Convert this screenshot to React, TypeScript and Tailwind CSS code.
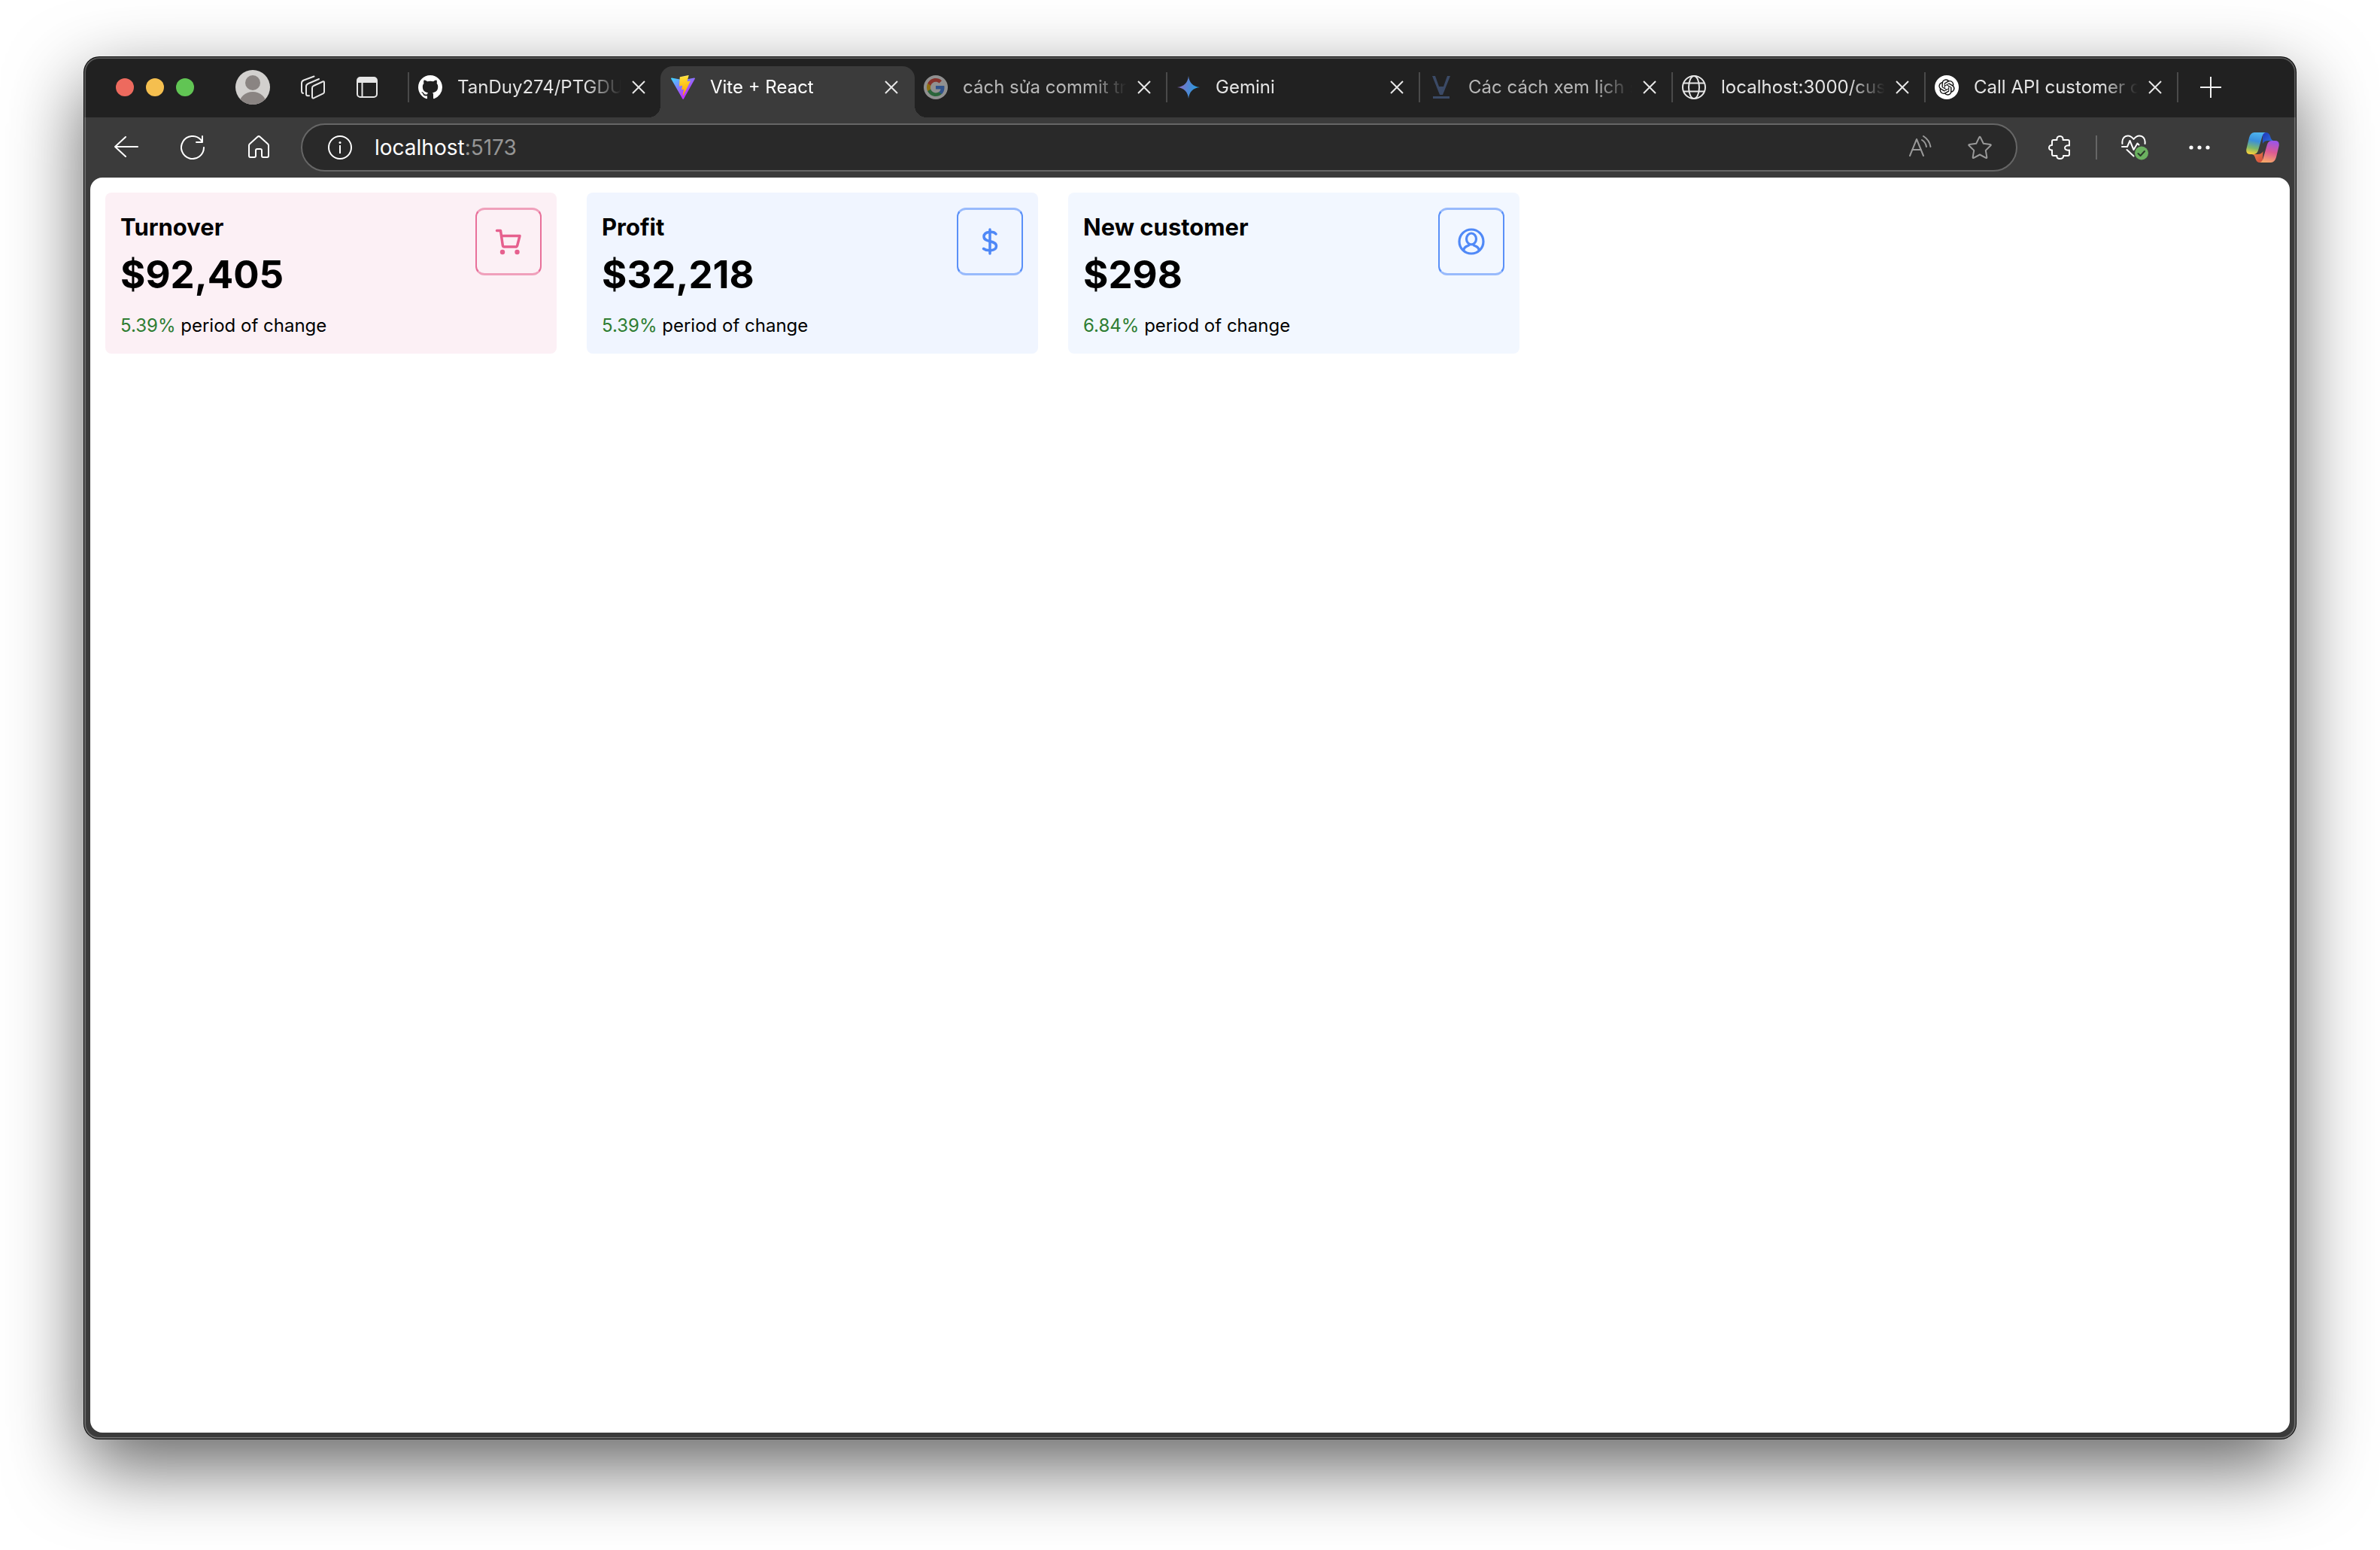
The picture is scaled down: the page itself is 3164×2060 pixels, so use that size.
import type { CSSProperties, ReactNode } from "react";

const fade: CSSProperties = { maskImage: "linear-gradient(to right, black 78%, transparent 100%)" };

function GithubIcon() {
  return (
    <svg viewBox="0 0 16 16" className="size-8" fill="#fff" aria-hidden="true">
      <path d="M8 0C3.58 0 0 3.58 0 8c0 3.54 2.29 6.53 5.47 7.59.4.07.55-.17.55-.38 0-.19-.01-.82-.01-1.49-2.01.37-2.53-.49-2.69-.94-.09-.23-.48-.94-.82-1.13-.28-.15-.68-.52-.01-.53.63-.01 1.08.58 1.23.82.72 1.21 1.87.87 2.33.66.07-.52.28-.87.51-1.07-1.78-.2-3.64-.89-3.64-3.95 0-.87.31-1.59.82-2.15-.08-.2-.36-1.02.08-2.12 0 0 .67-.21 2.2.82.64-.18 1.32-.27 2-.27s1.36.09 2 .27c1.53-1.04 2.2-.82 2.2-.82.44 1.1.16 1.92.08 2.12.51.56.82 1.27.82 2.15 0 3.07-1.87 3.75-3.65 3.95.29.25.54.73.54 1.48 0 1.07-.01 1.93-.01 2.2 0 .21.15.46.55.38A8.01 8.01 0 0 0 16 8c0-4.42-3.58-8-8-8z" />
    </svg>
  );
}

function ViteIcon() {
  return (
    <svg viewBox="0 0 256 257" className="size-8" aria-hidden="true">
      <defs>
        <linearGradient id="viteBlue" x1="-.828%" x2="57.636%" y1="7.652%" y2="78.411%">
          <stop offset="0%" stopColor="#41D1FF" />
          <stop offset="100%" stopColor="#BD34FE" />
        </linearGradient>
        <linearGradient id="viteGold" x1="43.376%" x2="50.316%" y1="2.242%" y2="89.03%">
          <stop offset="0%" stopColor="#FFEA83" />
          <stop offset="8.333%" stopColor="#FFDD35" />
          <stop offset="100%" stopColor="#FFA800" />
        </linearGradient>
      </defs>
      <path fill="url(#viteBlue)" d="M255.153 37.938L134.897 252.976c-2.483 4.44-8.862 4.466-11.382.048L.875 37.958c-2.746-4.814 1.371-10.646 6.827-9.67l120.385 21.517a6.537 6.537 0 0 0 2.322-.004l117.867-21.483c5.438-.991 9.574 4.796 6.877 9.62Z" />
      <path fill="url(#viteGold)" d="M185.432.063L96.44 17.501a3.268 3.268 0 0 0-2.634 3.014l-5.474 92.456a3.268 3.268 0 0 0 3.997 3.378l24.777-5.718c2.318-.535 4.413 1.507 3.936 3.838l-7.361 36.047c-.495 2.426 1.782 4.5 4.151 3.78l15.304-4.649c2.372-.72 4.652 1.36 4.15 3.788l-11.698 56.621c-.732 3.542 3.979 5.473 5.943 2.437l1.313-2.028l72.516-144.72c1.215-2.423-.88-5.186-3.54-4.672l-25.505 4.922c-2.396.462-4.435-1.77-3.759-4.114l16.646-57.705c.677-2.35-1.37-4.583-3.769-4.113Z" />
    </svg>
  );
}

function GoogleIcon() {
  return (
    <svg viewBox="0 0 32 32" className="size-8 opacity-50" aria-hidden="true">
      <circle cx="16" cy="16" r="16" fill="#fff" />
      <g transform="translate(4 4)">
        <path fill="#4285F4" d="M23.5 12.3c0-.9-.1-1.5-.2-2.2H12v4.5h6.6c-.3 1.5-1.1 2.7-2.4 3.6v2.9h3.9c2.200-2.100 3.400-5.100 3.400-8.800z" />
        <path fill="#34A853" d="M12 24c3.200 0 5.900-1.100 7.900-2.900l-3.900-2.900c-1.100.7-2.400 1.200-4 1.200-3.100 0-5.800-2.100-6.700-4.900H1.300v3C3.300 21.300 7.300 24 12 24z" />
        <path fill="#FBBC05" d="M5.300 14.300c-.5-1.500-.5-3.100 0-4.600v-3H1.300c-1.700 3.300-1.700 7.300 0 10.600z" />
        <path fill="#EA4335" d="M12 4.800c1.800 0 3.300.6 4.600 1.800l3.400-3.400C17.900 1.200 15.200 0 12 0 7.300 0 3.300 2.700 1.300 6.700l4 3C6.200 6.900 8.900 4.800 12 4.800z" />
      </g>
    </svg>
  );
}

function GeminiIcon() {
  return (
    <svg viewBox="0 0 32 32" className="size-8" aria-hidden="true">
      <defs>
        <linearGradient id="gemini" x1="0" x2="1" y1="0.400" y2="0.600">
          <stop offset="0%" stopColor="#9168C0" />
          <stop offset="45%" stopColor="#5684D1" />
          <stop offset="100%" stopColor="#1BA1E3" />
        </linearGradient>
      </defs>
      <path fill="url(#gemini)" d="M16 1C17 10 22 15 31 16 22 17 17 22 16 31 15 22 10 17 1 16 10 15 15 10 16 1z" />
    </svg>
  );
}

function VibloIcon() {
  return (
    <svg viewBox="0 0 32 32" className="size-8" fill="#3b4a66" aria-hidden="true">
      <path d="M4 1h4l5 14h6l5-14h4L18 26h-4z" />
      <path d="M5 28h22v3H5z" />
    </svg>
  );
}

function GlobeIcon() {
  return (
    <svg viewBox="0 0 32 32" className="size-8" fill="none" stroke="#e6e6e6" strokeWidth="2" aria-hidden="true">
      <circle cx="16" cy="16" r="15" />
      <ellipse cx="16" cy="16" rx="7" ry="15" />
      <path d="M2 10.500h28M2 21.500h28" />
    </svg>
  );
}

function OpenAiIcon() {
  return (
    <svg viewBox="0 0 32 32" className="size-8" aria-hidden="true">
      <circle cx="16" cy="16" r="16" fill="#fff" />
      <g transform="translate(5.300 5.300) scale(0.890)">
        <path
          fill="#111"
          d="M22.2819 9.8211a5.9847 5.9847 0 0 0-.5157-4.9108 6.0462 6.0462 0 0 0-6.5098-2.9A6.0651 6.0651 0 0 0 4.9807 4.1818a5.9847 5.9847 0 0 0-3.9977 2.9 6.0462 6.0462 0 0 0 .7427 7.0966 5.98 5.98 0 0 0 .511 4.9107 6.051 6.051 0 0 0 6.5146 2.9001A5.9847 5.9847 0 0 0 13.2599 24a6.0557 6.0557 0 0 0 5.7718-4.2058 5.9894 5.9894 0 0 0 3.9977-2.9001 6.0557 6.0557 0 0 0-.7475-7.0729zm-9.022 12.6081a4.4755 4.4755 0 0 1-2.8764-1.0408l.1419-.0804 4.7783-2.7582a.7948.7948 0 0 0 .3927-.6813v-6.7369l2.02 1.1686a.071.071 0 0 1 .038.052v5.5826a4.504 4.504 0 0 1-4.4945 4.4944zm-9.6607-4.1254a4.4708 4.4708 0 0 1-.5346-3.0137l.142.0852 4.783 2.7582a.7712.7712 0 0 0 .7806 0l5.8428-3.3685v2.3324a.0804.0804 0 0 1-.0332.0615L9.74 19.9502a4.4992 4.4992 0 0 1-6.1408-1.6464zM2.3408 7.8956a4.485 4.485 0 0 1 2.3655-1.9728V11.6a.7664.7664 0 0 0 .3879.6765l5.8144 3.3543-2.0201 1.1685a.0757.0757 0 0 1-.071 0l-4.8303-2.7865A4.504 4.504 0 0 1 2.3408 7.872zm16.5963 3.8558L13.1038 8.364 15.1192 7.2a.0757.0757 0 0 1 .071 0l4.8303 2.7913a4.4944 4.4944 0 0 1-.6765 8.1042v-5.6772a.79.79 0 0 0-.407-.667zm2.0107-3.0231l-.142-.0852-4.7735-2.7818a.7759.7759 0 0 0-.7854 0L9.409 9.2297V6.8974a.0662.0662 0 0 1 .0284-.0615l4.8303-2.7866a4.4992 4.4992 0 0 1 6.6802 4.66zM8.3065 12.863l-2.02-1.1638a.0804.0804 0 0 1-.038-.0567V6.0742a4.4992 4.4992 0 0 1 7.3757-3.4537l-.142.0805L8.704 5.459a.7948.7948 0 0 0-.3927.6813zm1.0976-2.3654l2.602-1.4998 2.6069 1.4998v2.9994l-2.5974 1.4997-2.6067-1.4997Z"
        />
      </g>
    </svg>
  );
}

type TabData = { title: string; icon: ReactNode; active?: boolean; dim?: boolean; sep?: boolean };

const tabs: TabData[] = [
  { title: "TanDuy274/PTGDU", icon: <GithubIcon />, sep: true },
  { title: "Vite + React", icon: <ViteIcon />, active: true },
  { title: "cách sửa commit tr", icon: <GoogleIcon />, dim: true },
  { title: "Gemini", icon: <GeminiIcon />, sep: true },
  { title: "Các cách xem lịch s", icon: <VibloIcon />, dim: true, sep: true },
  { title: "localhost:3000/cus", icon: <GlobeIcon />, sep: true },
  { title: "Call API customer c", icon: <OpenAiIcon />, sep: true },
];

function Tab({ title, icon, active, dim, sep }: TabData) {
  const color = active ? "text-white" : dim ? "text-[#b8b8b8]" : "text-[#e4e4e4]";
  return (
    <div className={`relative flex h-20 max-w-[336px] min-w-0 flex-1 items-center ${active ? "z-10" : ""}`}>
      {active && (
        <div className="absolute -right-0.5 bottom-0 left-0 top-3 rounded-t-[16px] bg-[#3b3b3b]">
          <div className="absolute -left-4 bottom-0 size-4 bg-[radial-gradient(circle_at_0_0,transparent_16px,#3b3b3b_16px)]" />
          <div className="absolute -right-4 bottom-0 size-4 bg-[radial-gradient(circle_at_100%_0,transparent_16px,#3b3b3b_16px)]" />
        </div>
      )}
      <span className={`h-10 w-0.5 shrink-0 ${sep ? "bg-[#4a4a4a]" : ""}`} />
      <button type="button" className="relative flex min-w-0 flex-1 items-center pl-3 text-left">
        <span className="shrink-0">{icon}</span>
        <span
          className={`ml-5 block w-[218px] overflow-hidden text-2xl leading-8 whitespace-nowrap ${color}`}
          style={fade}
        >
          {title}
        </span>
      </button>
      <button type="button" aria-label={`Close ${title}`} className="relative mr-[17px] grid size-6 shrink-0 place-items-center">
        <svg viewBox="0 0 18 18" className="size-[18px]" stroke="#e8e8e8" strokeWidth="2" aria-hidden="true">
          <path d="M1 1l16 16M17 1L1 17" />
        </svg>
      </button>
    </div>
  );
}

function IconButton({ label, className, children }: { label: string; className?: string; children: ReactNode }) {
  return (
    <button type="button" aria-label={label} className={`grid shrink-0 place-items-center ${className ?? ""}`}>
      {children}
    </button>
  );
}

function TabStrip() {
  return (
    <header className="flex h-20 items-center pl-[42px]">
      <div className="flex gap-4">
        <button type="button" aria-label="Close window" className="size-6 rounded-full bg-[#ed6a5e]" />
        <button type="button" aria-label="Minimize window" className="size-6 rounded-full bg-[#f5bf4f]" />
        <button type="button" aria-label="Zoom window" className="size-6 rounded-full bg-[#61c554]" />
      </div>
      <IconButton label="Profile" className="ml-[55px]">
        <svg viewBox="0 0 46 46" className="size-[46px]" aria-hidden="true">
          <defs>
            <clipPath id="avatar">
              <circle cx="23" cy="23" r="23" />
            </clipPath>
          </defs>
          <circle cx="23" cy="23" r="23" fill="#d2d0ce" />
          <g clipPath="url(#avatar)" fill="#8a8482">
            <circle cx="23" cy="17" r="10" />
            <ellipse cx="23" cy="45" rx="18" ry="16" />
          </g>
        </svg>
      </IconButton>
      <IconButton label="Workspaces" className="ml-[41px]">
        <svg viewBox="0 0 32 32" className="size-8" fill="none" stroke="#e6e6e6" strokeWidth="2" strokeLinejoin="round" strokeLinecap="round" aria-hidden="true">
          <path d="M17 14l12-5.500q2-.8 2 1.200v12.500q0 1.500-1.500 2.200l-12 5.800q-2.500 1-2.500-1.300V17q0-2.200 2-3z" />
          <path d="M24 5L10 11q-3 1.300-3 4v10q0 2 2 2.300h2" />
          <path d="M17.500 1.500L4 6.500Q1 7.700 1 10.500v11q0 1.800 2 2.500" />
        </svg>
      </IconButton>
      <IconButton label="Tab actions menu" className="ml-[42px]">
        <svg viewBox="0 0 28 28" className="size-7" aria-hidden="true">
          <rect x="1" y="1" width="26" height="26" rx="4" fill="none" stroke="#e6e6e6" strokeWidth="2" />
          <path d="M1 8V5q0-4 4-4h18q4 0 4 4v3z" fill="#e6e6e6" />
          <path d="M7.500 8v19" stroke="#e6e6e6" strokeWidth="2" />
        </svg>
      </IconButton>
      <nav aria-label="Tabs" className="ml-10 flex min-w-0 flex-1">
        {tabs.map((t) => (
          <Tab key={t.title} {...t} />
        ))}
        <div className="flex h-20 items-center">
          <span className="h-10 w-0.5 bg-[#4a4a4a]" />
          <IconButton label="New tab" className="ml-[29px]">
            <svg viewBox="0 0 28 28" className="size-7" stroke="#f0f0f0" strokeWidth="2" aria-hidden="true">
              <path d="M14 0v28M0 14h28" />
            </svg>
          </IconButton>
        </div>
      </nav>
    </header>
  );
}

function Toolbar() {
  return (
    <div className="flex h-20 items-center bg-[#3b3b3b] pr-[22px] pl-10">
      <IconButton label="Back">
        <svg viewBox="0 0 32 32" className="size-8" fill="none" stroke="#fff" strokeWidth="2" strokeLinecap="round" strokeLinejoin="round" aria-hidden="true">
          <path d="M31 15H1M15 2L1 15l14 13" />
        </svg>
      </IconButton>
      <IconButton label="Refresh" className="ml-14">
        <svg viewBox="0 0 32 32" className="size-8" fill="none" stroke="#fff" strokeWidth="2" strokeLinecap="round" strokeLinejoin="round" aria-hidden="true">
          <path d="M31 16a15 15 0 1 1-4-10.200l2 2.700M29 1v8h-8" />
        </svg>
      </IconButton>
      <IconButton label="Home" className="ml-14">
        <svg viewBox="0 0 32 32" className="size-8" fill="none" stroke="#fff" strokeWidth="2" strokeLinejoin="round" aria-hidden="true">
          <path d="M3 13.500q0-1.300 1-2.200L14.500 1.800q1.500-1.300 3 0L28 11.300q1 .9 1 2.200V27q0 2-2 2h-5q-2 0-2-2v-7q0-2-2-2h-4q-2 0-2 2v7q0 2-2 2H5q-2 0-2-2z" />
        </svg>
      </IconButton>
      <div className="ml-10 flex h-16 min-w-0 flex-1 items-center rounded-full border-2 border-[#666] bg-[#292929] pr-8 pl-[34px]">
        <IconButton label="View site information">
          <svg viewBox="0 0 32 32" className="size-8" fill="none" stroke="#fff" strokeWidth="2" aria-hidden="true">
            <circle cx="16" cy="16" r="15" />
            <path d="M16 13v11" />
            <circle cx="16" cy="9.500" r="1.500" fill="#fff" stroke="none" />
          </svg>
        </IconButton>
        <button type="button" aria-label="Address bar" className="ml-[30px] min-w-0 flex-1 text-left text-[28px] leading-10 text-white">
          localhost<span className="text-[#959595]">:5173</span>
        </button>
        <IconButton label="Read aloud">
          <svg viewBox="0 0 32 32" className="size-8" fill="none" stroke="#999" strokeWidth="2" strokeLinecap="round" strokeLinejoin="round" aria-hidden="true">
            <path d="M3 27L12 5l9 22M6 19h12" />
            <path d="M19 6q5 3 6 9M21 1q8 5 9.500 14" />
          </svg>
        </IconButton>
        <IconButton label="Add to favorites" className="ml-12">
          <svg viewBox="0 0 32 32" className="size-8" fill="none" stroke="#999" strokeWidth="2" strokeLinejoin="round" aria-hidden="true">
            <path d="M15.200 2.500q.8-1.500 1.600 0l4 8.200 9 1.300q1.700.3.500 1.500l-6.500 6.400 1.500 9q.2 1.600-1.200.9L16 25.500l-8.100 4.300q-1.400.7-1.200-.9l1.500-9-6.500-6.400q-1.200-1.200.5-1.500l9-1.300z" />
          </svg>
        </IconButton>
      </div>
      <IconButton label="Extensions" className="ml-10">
        <svg viewBox="0 0 32 32" className="size-8" fill="none" stroke="#fff" strokeWidth="2" strokeLinejoin="round" aria-hidden="true">
          <path d="M8 6h4.500C12 3 13.500 1 16.500 1S21 3 20.500 6H27q2 0 2 2v5.500c-3-.5-6 .5-6 3s3 3.500 6 3V25q0 2-2 2h-6c.5 2.500-1.500 4-4.500 4S12 29.500 12.500 27H8q-2 0-2-2v-5.500c-2.500.3-4-1-4-3.200s1.500-3.600 4-3.300V8q0-2 2-2z" />
        </svg>
      </IconButton>
      <span className="ml-8 h-8 w-0.5 shrink-0 bg-[#666]" />
      <IconButton label="Browser essentials" className="ml-8">
        <svg viewBox="0 0 38 34" className="h-[34px] w-[38px]" fill="none" stroke="#fff" strokeWidth="2" strokeLinecap="round" strokeLinejoin="round" aria-hidden="true">
          <path d="M1.500 12C.5 5 4.500 1.500 9 1.500c3.500 0 5.500 2 7.500 4.500 2-2.500 4-4.500 7.500-4.500 4.500 0 8.500 3.500 7.500 10.500" />
          <path d="M1 16h7l3.500-8 5 12 5-8.500 2 2" />
          <path d="M7.500 20l9 8.500" />
          <circle cx="27" cy="24.500" r="9" fill="#6bb160" stroke="none" />
          <path d="M22.500 25l3 3 5.500-6" stroke="#2b3a29" />
        </svg>
      </IconButton>
      <IconButton label="Settings and more" className="ml-[52px]">
        <svg viewBox="0 0 28 6" className="h-1.5 w-7" fill="#fff" aria-hidden="true">
          <circle cx="3" cy="3" r="2.600" />
          <circle cx="14" cy="3" r="2.600" />
          <circle cx="25" cy="3" r="2.600" />
        </svg>
      </IconButton>
      <IconButton label="Copilot" className="ml-12">
        <svg viewBox="0 0 44 42" className="h-[42px] w-11" aria-hidden="true">
          <defs>
            <linearGradient id="copA" x1="0.600" x2="0.400" y1="0" y2="1">
              <stop offset="0%" stopColor="#4fb5ee" />
              <stop offset="40%" stopColor="#3a8fdc" />
              <stop offset="75%" stopColor="#7fb868" />
              <stop offset="100%" stopColor="#f2cf3c" />
            </linearGradient>
            <linearGradient id="copB" x1="0.600" x2="0.400" y1="0" y2="1">
              <stop offset="0%" stopColor="#9a55e8" />
              <stop offset="50%" stopColor="#dd5a93" />
              <stop offset="100%" stopColor="#f7a868" />
            </linearGradient>
            <linearGradient id="copC" x1="0" x2="1" y1="0" y2="1">
              <stop offset="0%" stopColor="#2034b8" />
              <stop offset="100%" stopColor="#2f7be0" />
            </linearGradient>
            <linearGradient id="copD" x1="0" x2="1" y1="0" y2="1">
              <stop offset="0%" stopColor="#f08a4a" />
              <stop offset="100%" stopColor="#cf4a3c" />
            </linearGradient>
          </defs>
          <path fill="url(#copC)" d="M22 1h4q4.500 0 6 5 1.500 6 5 6h-8q-5 0-7 4z" />
          <path fill="url(#copD)" d="M22 41h-4q-4 0-5.500-5-1.500-6-5-6h8q5 0 7-4z" />
          <path fill="url(#copA)" d="M11 1h16q-4 0-5.500 5L16 25q-1.500 5-6.500 5H5.500Q-1 30 .5 22.500L4 8q2-7 7-7z" />
          <path fill="url(#copB)" d="M33 41H17q4 0 5.500-5L28 17q1.500-5 6.500-5h4q6.500 0 5 7.500L40 34q-2 7-7 7z" />
        </svg>
      </IconButton>
    </div>
  );
}

function CartGlyph() {
  return (
    <svg viewBox="0 0 36 36" className="size-9" fill="none" stroke="#e6608e" strokeWidth="3.500" strokeLinejoin="round" strokeLinecap="round" aria-hidden="true">
      <path d="M2.500 3.500H7.500L10.300 23q.3 2 2.200 2h15q1.700 0 2.200-1.800L33 10.500H9" />
      <circle cx="10" cy="32" r="3.200" fill="#e6608e" stroke="none" />
      <circle cx="29.500" cy="32" r="3.200" fill="#e6608e" stroke="none" />
    </svg>
  );
}

function DollarGlyph() {
  return (
    <svg viewBox="0 0 36 36" className="size-9" fill="none" stroke="#4f88f7" strokeWidth="3.500" strokeLinecap="round" strokeLinejoin="round" aria-hidden="true">
      <path d="M18 2v32" />
      <path d="M26 8C23 4 10 4 10 11.500C10 20 26.500 15.500 26.500 24C26.500 31 14 31 9.500 27.500" />
    </svg>
  );
}

function PersonGlyph() {
  return (
    <svg viewBox="0 0 36 36" className="size-9" fill="none" stroke="#5089f7" strokeWidth="3.200" strokeLinejoin="round" aria-hidden="true">
      <circle cx="18" cy="18" r="16" />
      <ellipse cx="18" cy="14.500" rx="6.500" ry="7.500" />
      <path d="M7.500 29.500q1-4 5-5.500 3.500-1 3.500-3.500M28.500 29.500q-1-4-5-5.500-3.500-1-3.500-3.500" />
    </svg>
  );
}

const pinkBox = "border-x-[#e8709a] border-y-[#f0a0bb]";
const blueBox = "border-x-[#5a90f8] border-y-[#98bafc]";

const stats = [
  { label: "Turnover", value: "$92,405", pct: "5.39%", bg: "bg-[#fcf0f5]", border: pinkBox, glyph: <CartGlyph /> },
  { label: "Profit", value: "$32,218", pct: "5.39%", bg: "bg-[#f0f5ff]", border: blueBox, glyph: <DollarGlyph /> },
  { label: "New customer", value: "$298", pct: "6.84%", bg: "bg-[#f2f7ff]", border: blueBox, glyph: <PersonGlyph /> },
];

export default function App() {
  return (
    <div className="flex min-h-screen flex-col overflow-hidden bg-white px-28 pt-[76px] pb-[148px] font-['Inter','Liberation_Sans',sans-serif]">
      <div className="relative flex flex-1 flex-col overflow-clip rounded-[20px] bg-[#212121] shadow-[0_0_0_1px_#000,0_36px_100px_rgba(0,0,0,0.62)]">
        <TabStrip />
        <Toolbar />
        <div className="flex flex-1 flex-col bg-[#3b3b3b] px-2 pb-2">
          <main className="flex-1 rounded-[16px] bg-white p-5 text-black">
            <div className="flex gap-10">
              {stats.map((s) => (
                <section key={s.label} className={`flex w-[600px] items-start justify-between rounded-lg p-5 ${s.bg}`}>
                  <div className="pt-0.5">
                    <h2 className="text-[31px] leading-[48px] font-bold">{s.label}</h2>
                    <p className="text-[51px] leading-[78px] font-bold">{s.value}</p>
                    <p className="mt-3 text-2xl leading-[34px]">
                      <span className="text-[#2e7d32]">{s.pct}</span> period of change
                    </p>
                  </div>
                  <div className={`grid h-[90px] w-[88px] place-items-center rounded-xl border-x-2 border-y-3 ${s.border}`}>{s.glyph}</div>
                </section>
              ))}
            </div>
          </main>
        </div>
        <div className="pointer-events-none absolute inset-0 z-20 rounded-[20px] border-2 border-white/25" />
      </div>
    </div>
  );
}
